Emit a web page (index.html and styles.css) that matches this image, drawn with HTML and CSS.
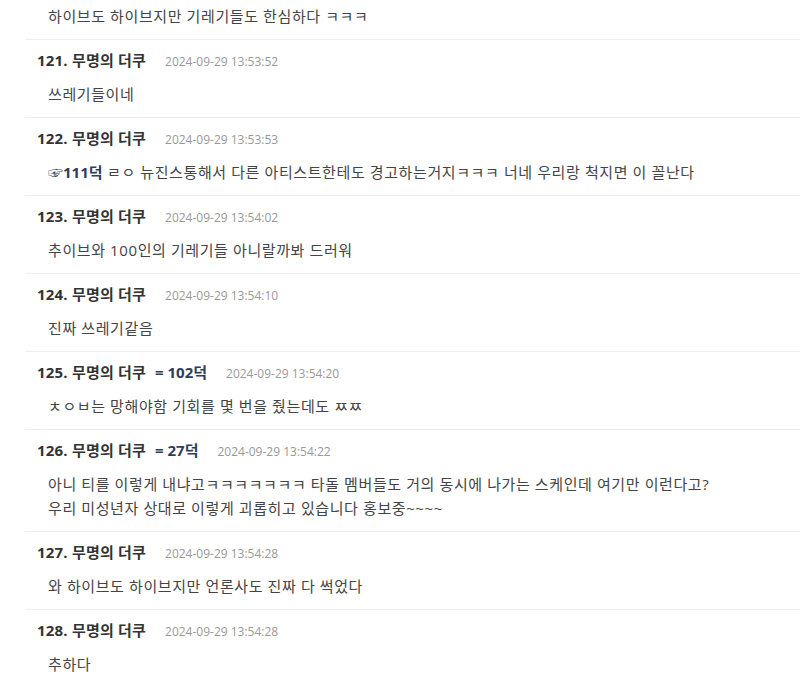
FILE: index.html
```html
<!DOCTYPE html>
<html>
<head>
	<meta charset="utf-8">
	<title>댓글</title>
	<link rel="stylesheet" href="styles.css">
</head>
<body>
	<ul class="cmt-list">
		<li class="cmt cmt-first">
			<p class="cmt-body">하이브도 하이브지만 기레기들도 한심하다 ㅋㅋㅋ</p>
		</li>
		<li class="cmt">
			<div class="cmt-head"><span class="nick">121. 무명의 더쿠</span><span class="date">2024-09-29 13:53:52</span></div>
			<p class="cmt-body">쓰레기들이네</p>
		</li>
		<li class="cmt">
			<div class="cmt-head"><span class="nick">122. 무명의 더쿠</span><span class="date">2024-09-29 13:53:53</span></div>
			<p class="cmt-body"><a href="#" class="reply">☞111덕</a> ㄹㅇ 뉴진스통해서 다른 아티스트한테도 경고하는거지ㅋㅋㅋ 너네 우리랑 척지면 이 꼴난다</p>
		</li>
		<li class="cmt">
			<div class="cmt-head"><span class="nick">123. 무명의 더쿠</span><span class="date">2024-09-29 13:54:02</span></div>
			<p class="cmt-body">추이브와 100인의 기레기들 아니랄까봐 드러워</p>
		</li>
		<li class="cmt">
			<div class="cmt-head"><span class="nick">124. 무명의 더쿠</span><span class="date">2024-09-29 13:54:10</span></div>
			<p class="cmt-body">진짜 쓰레기같음</p>
		</li>
		<li class="cmt">
			<div class="cmt-head"><span class="nick">125. 무명의 더쿠</span><span class="to">= 102덕</span><span class="date">2024-09-29 13:54:20</span></div>
			<p class="cmt-body">ㅊㅇㅂ는 망해야함 기회를 몇 번을 줬는데도 ㅉㅉ</p>
		</li>
		<li class="cmt">
			<div class="cmt-head"><span class="nick">126. 무명의 더쿠</span><span class="to">= 27덕</span><span class="date">2024-09-29 13:54:22</span></div>
			<p class="cmt-body">아니 티를 이렇게 내냐고ㅋㅋㅋㅋㅋㅋㅋ 타돌 멤버들도 거의 동시에 나가는 스케인데 여기만 이런다고?<br>우리 미성년자 상대로 이렇게 괴롭히고 있습니다 홍보중~~~~</p>
		</li>
		<li class="cmt">
			<div class="cmt-head"><span class="nick">127. 무명의 더쿠</span><span class="date">2024-09-29 13:54:28</span></div>
			<p class="cmt-body">와 하이브도 하이브지만 언론사도 진짜 다 썩었다</p>
		</li>
		<li class="cmt">
			<div class="cmt-head"><span class="nick">128. 무명의 더쿠</span><span class="date">2024-09-29 13:54:28</span></div>
			<p class="cmt-body">추하다</p>
		</li>
	</ul>
</body>
</html>
```

FILE: styles.css
```css
*{margin:0;padding:0;}
body{
	background:#fff;
	font-family:"Open Sans","Noto Sans CJK KR",sans-serif;
	color:#444;
}
.cmt-list{
	list-style:none;
	margin-left:25px;
}
.cmt{
	padding:8px 0 11px;
	border-bottom:1px solid #efefef;
}
.cmt-first{
	padding:4px 0 11px;
}
.cmt-first .cmt-body{
	margin-top:0;
}
.cmt-head{
	padding-left:12px;
	line-height:24px;
	height:24px;
	white-space:nowrap;
}
.nick{
	font-size:15px;
	font-weight:bold;
	color:#333;
	letter-spacing:0.2px;
}
.to{
	font-size:15px;
	font-weight:bold;
	color:#2c3e58;
	margin-left:9px;
}
.date{
	font-size:12px;
	color:#999;
	margin-left:19px;
}
.cmt-body{
	margin-top:10px;
	padding-left:23px;
	font-size:15px;
	letter-spacing:0.6px;
	line-height:24px;
}
.reply{
	font-weight:bold;
	color:#2c3e58;
	text-decoration:none;
	letter-spacing:0;
}
```
